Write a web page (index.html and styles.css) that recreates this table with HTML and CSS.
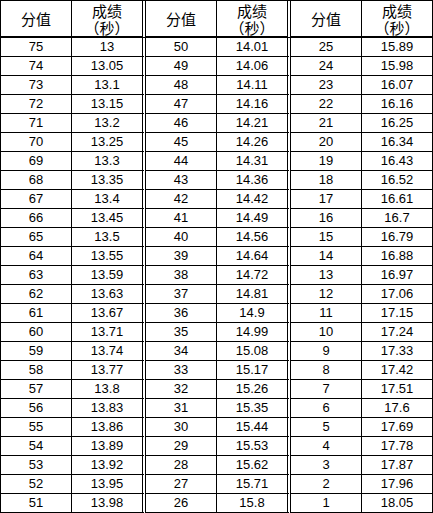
FILE: index.html
```html
<!DOCTYPE html>
<html lang="zh">
<head>
<meta charset="utf-8">
<link rel="stylesheet" href="styles.css">
</head>
<body>
<table class="score-table">
<thead>
<tr>
<th class="c">分值</th><th class="c g">成绩<br>（秒）</th>
<th class="c">分值</th><th class="c g">成绩<br>（秒）</th>
<th class="c">分值</th><th class="c">成绩<br>（秒）</th>
</tr>
</thead>
<tbody id="rows"></tbody>
</table>
<script src="app.js"></script>
</body>
</html>
```
FILE: app.js
```js
var a = ["13","13.05","13.1","13.15","13.2","13.25","13.3","13.35","13.4","13.45","13.5","13.55","13.59","13.63","13.67","13.71","13.74","13.77","13.8","13.83","13.86","13.89","13.92","13.95","13.98"];
var b = ["14.01","14.06","14.11","14.16","14.21","14.26","14.31","14.36","14.42","14.49","14.56","14.64","14.72","14.81","14.9","14.99","15.08","15.17","15.26","15.35","15.44","15.53","15.62","15.71","15.8"];
var c = ["15.89","15.98","16.07","16.16","16.25","16.34","16.43","16.52","16.61","16.7","16.79","16.88","16.97","17.06","17.15","17.24","17.33","17.42","17.51","17.6","17.69","17.78","17.87","17.96","18.05"];
var html = "";
for (var i = 0; i < 25; i++) {
  html += "<tr>" +
    "<td class='c'>" + (75 - i) + "</td><td class='c g'>" + a[i] + "</td>" +
    "<td class='c'>" + (50 - i) + "</td><td class='c g'>" + b[i] + "</td>" +
    "<td class='c'>" + (25 - i) + "</td><td class='c'>" + c[i] + "</td></tr>";
}
document.getElementById("rows").innerHTML = html;
```
FILE: styles.css
```css
html, body {
  margin: 0;
  padding: 0;
  background: #fff;
}
.score-table {
  border-collapse: separate;
  border-spacing: 0;
  width: 433px;
  table-layout: fixed;
  border-top: 1px solid #000;
  border-left: 1px solid #000;
  font-family: "Liberation Sans", Arial, "Noto Sans CJK SC", sans-serif;
  color: #000;
}
.c {
  width: 70px;
  padding: 0;
  text-align: center;
  border-right: 1px solid #000;
  border-bottom: 1px solid #000;
  box-sizing: content-box;
}
.c.g {
  border-right: 4px double #000;
}
th.c {
  height: 35px;
  border-bottom: 2px solid #000;
  font-weight: normal;
  font-size: 15px;
  line-height: 17px;
  font-family: "Noto Sans CJK SC", sans-serif;
  overflow: hidden;
}
td.c {
  height: 18px;
  font-size: 13px;
  line-height: 18px;
}
```
